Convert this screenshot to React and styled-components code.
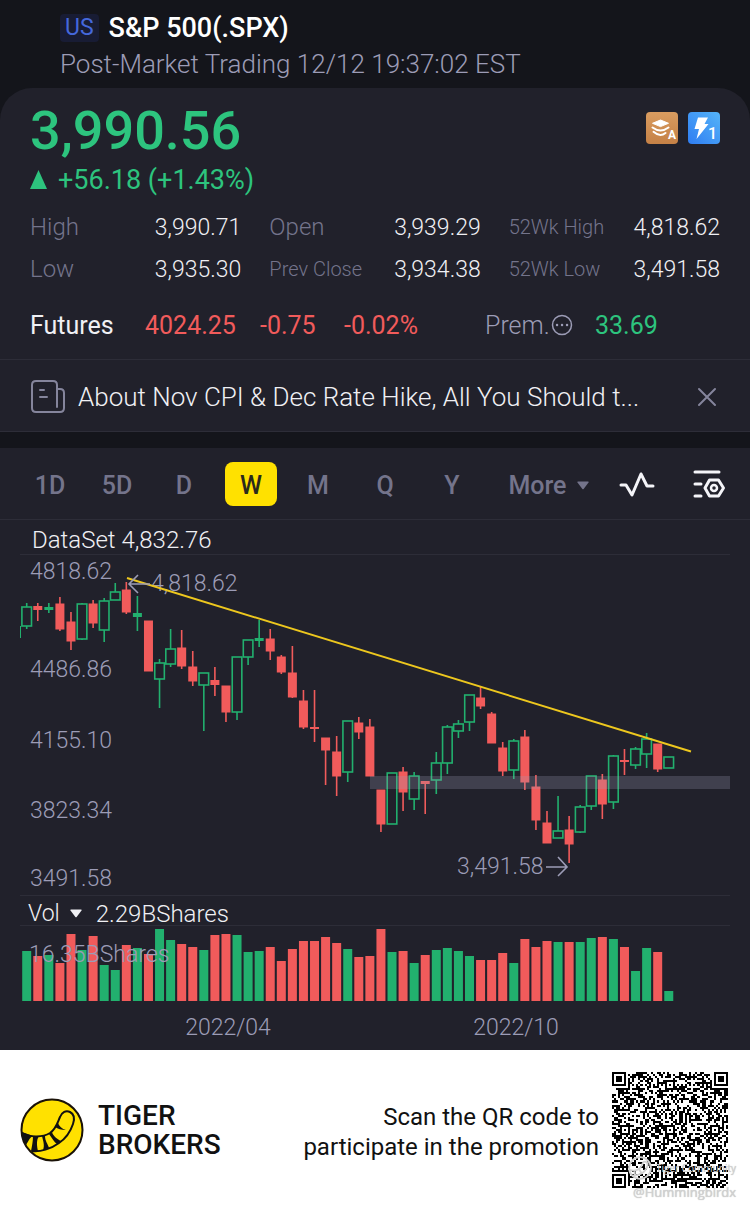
import React from 'react';
import styled, { createGlobalStyle } from 'styled-components';

const GlobalStyle = createGlobalStyle`
  * {
    box-sizing: border-box;
  }
  body {
    margin: 0;
    background: #fff;
    font-family: Roboto, 'Liberation Sans', sans-serif;
  }
  button {
    font-family: inherit;
    border: 0;
    padding: 0;
    background: none;
    cursor: pointer;
  }
  svg {
    display: block;
    flex: none;
  }
`;

const colors = {
  dark: '#14151b',
  panel: '#21212b',
  line: '#2d2d38',
  green: '#2dc47e',
  up: '#22b06e',
  red: '#f15b5b',
  text: '#f0f0f4',
  muted: '#74748b',
  label: '#9c9cb6'
};

const Page = styled.main`
  background: ${colors.dark};
`;

const Header = styled.header`
  padding: 8px 60px 6px;
`;

const TitleRow = styled.div`
  display: flex;
  align-items: center;
  gap: 10px;
  height: 38px;
  padding-top: 2px;
`;

const Market = styled.span`
  padding: 0 5px;
  border-radius: 4px;
  background: #181c34;
  color: #4568dc;
  font-size: 23px;
  line-height: 28px;
`;

const Title = styled.h1`
  margin: 0;
  color: #fff;
  font-size: 27px;
  font-weight: 500;
`;

const Session = styled.p`
  margin: 0;
  color: ${colors.label};
  font-size: 26px;
  font-weight: 300;
  line-height: 36px;
`;

const Quote = styled.section`
  padding: 13px 30px 14px;
  border-radius: 32px 32px 0 0;
  border-bottom: 1px solid ${colors.line};
  background: ${colors.panel};
`;

const PriceRow = styled.div`
  display: flex;
  justify-content: space-between;
  padding-bottom: 1px;
`;

const Price = styled.strong`
  color: ${colors.green};
  font-size: 54px;
  font-weight: 500;
  line-height: 60px;
`;

const Badges = styled.div`
  display: flex;
  gap: 10px;
  padding-top: 11px;
`;

const Change = styled.div`
  display: flex;
  align-items: center;
  gap: 11px;
  color: ${colors.green};
  font-size: 27px;
  line-height: 36px;
`;

const Stats = styled.dl`
  display: grid;
  grid-template-columns: repeat(3, 1fr);
  column-gap: 28px;
  margin: 8px 0 15px;
`;

const Stat = styled.div`
  display: flex;
  justify-content: space-between;
  align-items: center;
  height: 42px;
  dt {
    color: ${colors.muted};
    font-size: ${props => (props.$small ? '20px' : '24px')};
    font-weight: 300;
  }
  dd {
    margin: 0;
    color: ${colors.text};
    font-size: 23px;
    font-weight: 300;
  }
`;

const Futures = styled.div`
  display: grid;
  grid-template-columns: 115fr 115fr 84fr 141fr 110fr 125fr;
  align-items: center;
  height: 40px;
  color: ${colors.text};
  font-size: 25px;
  white-space: nowrap;
`;

const FuturesValue = styled.span`
  color: ${props => (props.$up ? colors.green : colors.red)};
`;

const Premium = styled.span`
  display: flex;
  align-items: center;
  gap: 1px;
  color: ${colors.label};
  font-weight: 300;
`;

const News = styled.section`
  display: flex;
  align-items: center;
  height: 72px;
  padding: 2px 32px 0 30px;
  border-bottom: 1px solid ${colors.line};
  background: ${colors.panel};
`;

const NewsLink = styled.a`
  flex: 1;
  min-width: 0;
  margin-left: 12px;
  color: ${colors.text};
  font-size: 26px;
  font-weight: 300;
  text-decoration: none;
  white-space: nowrap;
`;

const ChartPanel = styled.section`
  margin-top: 16px;
  background: ${colors.panel};
`;

const Toolbar = styled.nav`
  display: flex;
  align-items: center;
  justify-content: space-between;
  height: 72px;
  padding: 0 24px;
  border-bottom: 1px solid ${colors.line};
`;

const Tabs = styled.div`
  display: flex;
  gap: 15px;
`;

const Tab = styled.button`
  width: 52px;
  height: 44px;
  padding-top: 3px;
  border-radius: 8px;
  color: ${props => (props.$active ? '#2b2a1c' : colors.muted)};
  font-size: 25px;
  font-weight: 500;
  ${props => props.$active && 'background: #ffe100;'}
`;

const More = styled.button`
  display: flex;
  align-items: center;
  gap: 10px;
  padding-top: 3px;
  color: ${colors.muted};
  font-size: 25px;
  font-weight: 500;
`;

const Tools = styled.div`
  display: flex;
  align-items: center;
  gap: 37px;
`;

const ChartBody = styled.div`
  padding: 0 20px;
`;

const Legend = styled.div`
  display: flex;
  align-items: center;
  gap: 14px;
  height: ${props => props.$height}px;
  padding: 6px ${props => props.$indent}px 0;
  border-bottom: 1px solid ${colors.line};
  color: ${colors.text};
  font-size: 24px;
  font-weight: 300;
`;

const VolumeButton = styled.button`
  display: flex;
  align-items: center;
  gap: 10px;
  color: inherit;
  font-size: 23px;
  font-weight: 300;
`;

const Chart = styled.svg`
  width: 100%;
  height: auto;
  text {
    fill: ${colors.label};
    font-size: 23px;
    font-weight: 300;
  }
`;

const PriceChart = styled(Chart)`
  border-bottom: 1px solid ${colors.line};
`;

const Footer = styled.footer`
  display: flex;
  align-items: center;
  padding: 22px 22px 22px 20px;
  background: #fff;
  color: #111;
`;

const Brand = styled.div`
  margin: 0 auto 0 14px;
  font-size: 28px;
  font-weight: 500;
  line-height: 29px;
`;

const Promo = styled.p`
  margin: 0 13px 0 0;
  padding-top: 4px;
  font-size: 24px;
  line-height: 30px;
  text-align: right;
`;

const CodeBox = styled.div`
  position: relative;
`;

const Watermark = styled.div`
  position: absolute;
  right: -8px;
  bottom: -16px;
  display: flex;
  flex-direction: column;
  align-items: flex-end;
  color: #d2d2d2;
  font: 13px/24px 'Open Sans', sans-serif;
  text-shadow: 0 0 1px rgba(0, 0, 0, 0.3);
  white-space: nowrap;
`;

const WatermarkBrand = styled.span`
  display: flex;
  align-items: center;
  gap: 4px;
  font-size: 10px;
`;

// direction, high, body top, body bottom, low, volume
const candles = [
  ['u', 603, 607, 626, 629, 50],
  ['d', 603, 606, 610, 621, 45],
  ['u', 603, 607, 610, 613, 46],
  ['d', 597, 604, 629, 631, 38],
  ['d', 612, 622, 641, 650, 67],
  ['u', 603, 604, 639, 640, 51],
  ['d', 600, 604, 623, 628, 65],
  ['u', 598, 601, 630, 642, 36],
  ['u', 583, 592, 600, 600, 31],
  ['d', 582, 590, 612, 614, 56],
  ['u', 596, 613, 617, 631, 53],
  ['d', 621, 621, 671, 671, 47],
  ['u', 659, 663, 679, 708, 72],
  ['u', 629, 649, 664, 667, 61],
  ['d', 630, 648, 666, 669, 57],
  ['d', 651, 667, 681, 686, 54],
  ['u', 673, 673, 685, 731, 51],
  ['d', 667, 680, 685, 696, 66],
  ['d', 686, 686, 712, 722, 67],
  ['u', 657, 657, 712, 720, 66],
  ['u', 640, 640, 657, 665, 49],
  ['u', 620, 638, 641, 647, 50],
  ['d', 629, 639, 651, 660, 54],
  ['d', 655, 657, 672, 674, 40],
  ['d', 646, 673, 697, 698, 52],
  ['d', 690, 701, 727, 729, 60],
  ['d', 690, 727, 729, 742, 60],
  ['d', 738, 738, 750, 785, 64],
  ['d', 736, 752, 776, 796, 58],
  ['u', 721, 721, 772, 782, 52],
  ['d', 717, 723, 732, 739, 44],
  ['d', 719, 727, 776, 776, 45],
  ['d', 790, 790, 824, 832, 72],
  ['u', 773, 773, 824, 824, 49],
  ['d', 767, 772, 792, 811, 50],
  ['u', 772, 776, 799, 810, 38],
  ['d', 781, 781, 784, 814, 46],
  ['u', 752, 763, 780, 794, 51],
  ['u', 725, 727, 763, 774, 53],
  ['u', 720, 724, 731, 738, 50],
  ['u', 695, 695, 722, 731, 45],
  ['d', 687, 698, 706, 709, 41],
  ['d', 712, 714, 743, 743, 41],
  ['d', 742, 748, 771, 776, 48],
  ['u', 739, 741, 770, 779, 38],
  ['d', 730, 737, 782, 790, 62],
  ['d', 775, 787, 820, 830, 54],
  ['d', 811, 823, 843, 843, 60],
  ['u', 796, 831, 838, 838, 59],
  ['d', 816, 830, 844, 863, 59],
  ['u', 805, 807, 832, 833, 59],
  ['u', 776, 776, 806, 810, 63],
  ['d', 774, 780, 804, 819, 64],
  ['u', 755, 756, 802, 809, 62],
  ['d', 749, 760, 762, 775, 54],
  ['u', 747, 749, 765, 769, 30],
  ['u', 733, 739, 754, 768, 53],
  ['d', 744, 744, 769, 772, 49],
  ['u', 757, 757, 768, 768, 10]
];

const candleX = i => 26.7 + i * 11.07;

function Candle({ index, data }) {
  const [dir, high, top, bottom, low] = data;
  const x = candleX(index);
  const stroke = dir === 'u' ? colors.up : colors.red;
  const hollow = dir === 'u' && bottom - top > 5;
  const flat = bottom - top <= 5;
  return (
    <g stroke={stroke} strokeWidth='1.6'>
      <path d={`M${x} ${high}V${top}M${x} ${bottom}V${low}`} />
      {hollow ? (
        <rect x={x - 4.8} y={top} width='9.6' height={bottom - top} fill='none' />
      ) : (
        <rect
          x={x - 4.5}
          y={flat ? top : top - 0.5}
          width='9'
          height={flat ? bottom - top : bottom - top + 1}
          stroke='none'
          fill={stroke}
        />
      )}
    </g>
  );
}

const levels = [
  [579, '4818.62'],
  [677, '4486.86'],
  [748, '4155.10'],
  [818, '3823.34'],
  [886, '3491.58']
];

const QR_SIZE = 57;

function isDark(row, col) {
  const corners = [[0, 0], [0, QR_SIZE - 7], [QR_SIZE - 7, 0]];
  for (const [r, c] of corners) {
    const dr = row - r;
    const dc = col - c;
    if (dr >= -1 && dr <= 7 && dc >= -1 && dc <= 7) {
      const ring = Math.max(Math.abs(dr - 3), Math.abs(dc - 3));
      return ring === 3 || ring < 2;
    }
  }
  for (const r of [6, 28, 50]) {
    for (const c of [6, 28, 50]) {
      const ring = Math.max(Math.abs(row - r), Math.abs(col - c));
      if (ring <= 2) {
        return ring !== 1;
      }
    }
  }
  if (row === 6) return col % 2 === 0;
  if (col === 6) return row % 2 === 0;
  let h = (row * 374761393 + col * 668265263) | 0;
  h = Math.imul(h ^ (h >>> 13), 1274126177);
  return ((h ^ (h >>> 16)) & 1) === 1;
}

let qrPath = '';
for (let r = 0; r < QR_SIZE; r++) {
  for (let c = 0; c < QR_SIZE; c++) {
    if (isDark(r, c)) qrPath += `M${c} ${r}h1v1h-1z`;
  }
}

function LayersBadge() {
  return (
    <svg width='32' height='32' viewBox='0 0 32 32'>
      <defs>
        <linearGradient id='gold' x1='0' y1='0' x2='0' y2='1'>
          <stop offset='0' stopColor='#d99c60' />
          <stop offset='1' stopColor='#c58146' />
        </linearGradient>
      </defs>
      <rect width='32' height='32' rx='4' fill='url(#gold)' />
      <path d='M14.500 8L22.500 11.300L14.500 14.600L6.500 11.300Z' fill='#fff' stroke='#fff' strokeLinejoin='round' />
      <path d='M6.500 15.500Q14.500 21.500 22.500 15.500M7.500 19.800Q14 25.500 19.500 21' fill='none' stroke='#fff' strokeWidth='2' strokeLinecap='round' />
      <text x='22' y='27' fill='#fff' fontSize='12' fontWeight='700'>A</text>
    </svg>
  );
}

function FlashBadge() {
  return (
    <svg width='32' height='32' viewBox='0 0 32 32'>
      <defs>
        <linearGradient id='sky' x1='1' y1='0' x2='0' y2='1'>
          <stop offset='0' stopColor='#55b4f8' />
          <stop offset='1' stopColor='#2f7df2' />
        </linearGradient>
      </defs>
      <rect width='32' height='32' rx='4' fill='url(#sky)' />
      <path d='M10 5.500H20L16.500 12H20.500L8.500 27L11 17H6.500Z' fill='#fff' />
      <text x='20' y='27' fill='#fff' fontSize='16' fontWeight='500'>1</text>
    </svg>
  );
}

function NewsIcon() {
  return (
    <svg width='36' height='34' viewBox='0 0 36 34' fill='none' stroke='#85859c' strokeWidth='2' strokeLinecap='round'>
      <path d='M27 27V5Q27 1 23 1H6Q2 1 2 5V28Q2 32 6 32H30Q34 32 34 28V13Q34 9 30 9H28' />
      <path d='M10 10H14M10 17H17' />
    </svg>
  );
}

function Caret() {
  return (
    <svg width='12' height='9' viewBox='0 0 12 9' fill='currentColor'>
      <path d='M1 0.500H11Q12 0.500 11.500 1.500L6.600 8Q6 8.600 5.400 8L0.500 1.500Q0 0.500 1 0.500Z' />
    </svg>
  );
}

function TigerLogo() {
  return (
    <svg width='64' height='64' viewBox='0 0 64 64'>
      <circle cx='32' cy='32' r='30.500' fill='#ffe100' stroke='#1a1208' strokeWidth='2' />
      <path
        d='M2 35C9 39 22 40 30 35C36 31 37 26 40 19C42 14 46 12 50 14C54 16 55 20 53 26C50 35 45 41 39 45C31 51 20 54 12 53'
        fill='none'
        stroke='#111'
        strokeWidth='2'
      />
      <path
        d='M2 34L13 38C10 39 9 42 6 47L2 40ZM13 38L19 38C16 42 17 49 18 53L11 53C12 48 13 43 13 38ZM22 38L25 38C25 43 28 46 29 50L23 52C25 47 23 43 22 38ZM29 36L32 34C33 38 37 41 41 43L37 46C34 44 32 40 29 36ZM35 29L38 25C39 28 42 31 46 32C41 32 38 31 35 29Z'
        fill='#111'
      />
    </svg>
  );
}

const stats = [
  ['High', '3,990.71'],
  ['Open', '3,939.29'],
  ['52Wk High', '4,818.62', true],
  ['Low', '3,935.30'],
  ['Prev Close', '3,934.38', true],
  ['52Wk Low', '3,491.58', true]
];

const periods = ['1D', '5D', 'D', 'W', 'M', 'Q', 'Y'];

export default function App() {
  const [period, setPeriod] = React.useState('W');
  return (
    <Page>
      <GlobalStyle />
      <Header>
        <TitleRow>
          <Market>US</Market>
          <Title>S&amp;P 500(.SPX)</Title>
        </TitleRow>
        <Session>Post-Market Trading 12/12 19:37:02 EST</Session>
      </Header>

      <Quote>
        <PriceRow>
          <Price>3,990.56</Price>
          <Badges>
            <LayersBadge />
            <FlashBadge />
          </Badges>
        </PriceRow>
        <Change>
          <svg width='17' height='20' viewBox='0 0 17 20' fill='currentColor'>
            <path d='M8.500 0L17 19H0Z' />
          </svg>
          +56.18 (+1.43%)
        </Change>
        <Stats>
          {stats.map(([name, value, small]) => (
            <Stat key={name} $small={small}>
              <dt>{name}</dt>
              <dd>{value}</dd>
            </Stat>
          ))}
        </Stats>
        <Futures>
          <span>Futures</span>
          <FuturesValue>4024.25</FuturesValue>
          <FuturesValue>-0.75</FuturesValue>
          <FuturesValue>-0.02%</FuturesValue>
          <Premium>
            Prem.
            <svg width='22' height='22' viewBox='0 0 22 22' fill='none' stroke='currentColor' strokeWidth='1.5'>
              <circle cx='11' cy='11' r='9.500' />
              <path d='M6 11H6.100M11 11H11.100M16 11H16.100' strokeWidth='2.400' strokeLinecap='round' />
            </svg>
          </Premium>
          <FuturesValue $up>33.69</FuturesValue>
        </Futures>
      </Quote>

      <News>
        <NewsIcon />
        <NewsLink href='#news'>About Nov CPI &amp; Dec Rate Hike, All You Should t...</NewsLink>
        <button aria-label='Close'>
          <svg width='22' height='22' viewBox='0 0 22 22' stroke='#85859c' strokeWidth='2' strokeLinecap='round'>
            <path d='M3 3L19 19M19 3L3 19' />
          </svg>
        </button>
      </News>

      <ChartPanel>
        <Toolbar>
          <Tabs>
            {periods.map(name => (
              <Tab key={name} $active={name === period} onClick={() => setPeriod(name)}>
                {name}
              </Tab>
            ))}
          </Tabs>
          <More>
            More <Caret />
          </More>
          <Tools>
            <button aria-label='Draw'>
              <svg width='36' height='26' viewBox='0 0 36 26' fill='none' stroke='#f4f4f8' strokeWidth='3' strokeLinecap='round' strokeLinejoin='round'>
                <path d='M2 14H7L13 24L22 3L28 15H34' />
              </svg>
            </button>
            <button aria-label='Chart settings'>
              <svg width='34' height='30' viewBox='0 0 34 30' fill='none' stroke='#f4f4f8' strokeWidth='3' strokeLinecap='round' strokeLinejoin='round'>
                <path d='M3 3H27M3 15H9M3 27H9' />
                <path d='M17.500 11H26.500L31.500 19L26.500 27H17.500L13 19Z' />
                <circle cx='22' cy='19' r='3' strokeWidth='2.500' />
              </svg>
            </button>
          </Tools>
        </Toolbar>

        <ChartBody>
          <Legend $height={35} $indent={12}>DataSet 4,832.76</Legend>
          <PriceChart viewBox='20 555 710 340'>
            <path d='M20.500 626V638' stroke={colors.up} />
            {candles.map((data, i) => (
              <Candle key={i} index={i} data={data} />
            ))}
            <rect x='370' y='776' width='360' height='13' fill='#a0a0b8' fillOpacity='0.25' />
            {levels.map(([y, label]) => (
              <text key={label} x='30' y={y}>{label}</text>
            ))}
            <text x='151' y='591'>4,818.62</text>
            <text x='457' y='874'>3,491.58</text>
            <path d='M127 578L691 751.500' stroke='#edc71e' strokeWidth='2' />
            <g fill='none' stroke={colors.label} strokeWidth='1.600'>
              <path d='M150 584H129M138 575L129 584L138 593' />
              <path d='M546 867H567M558 857L567 867L558 876' />
            </g>
          </PriceChart>
          <Legend $height={30} $indent={8}>
            <VolumeButton>
              Vol <Caret />
            </VolumeButton>
            2.29BShares
          </Legend>
          <Chart viewBox='20 0 710 124'>
            {candles.map(([dir, , , , , volume], i) => (
              <rect
                key={i}
                x={candleX(i) - 4.5}
                y={75 - volume}
                width='9'
                height={volume}
                fill={dir === 'u' ? colors.up : colors.red}
              />
            ))}
            <text x='29' y='36'>16.35BShares</text>
            <text x='228' y='109' textAnchor='middle'>2022/04</text>
            <text x='516' y='109' textAnchor='middle'>2022/10</text>
          </Chart>
        </ChartBody>
      </ChartPanel>

      <Footer>
        <TigerLogo />
        <Brand>
          TIGER
          <br />
          BROKERS
        </Brand>
        <Promo>
          Scan the QR code to
          <br />
          participate in the promotion
        </Promo>
        <CodeBox>
          <svg width='116' height='116' viewBox='0 0 57 57' shapeRendering='crispEdges'>
            <path d={qrPath} />
          </svg>
          <Watermark>
            <WatermarkBrand>
              <svg width='24' height='24' viewBox='0 0 64 64' fill='none' stroke='#d2d2d2' strokeWidth='5'>
                <circle cx='32' cy='32' r='29' />
                <path d='M3 37C20 42 34 36 39 20C42 12 54 14 52 26C48 42 32 52 12 53M18 39V51M30 36L36 46' />
              </svg>
              Tiger Community
            </WatermarkBrand>
            @Hummingbirdx
          </Watermark>
        </CodeBox>
      </Footer>
    </Page>
  );
}
